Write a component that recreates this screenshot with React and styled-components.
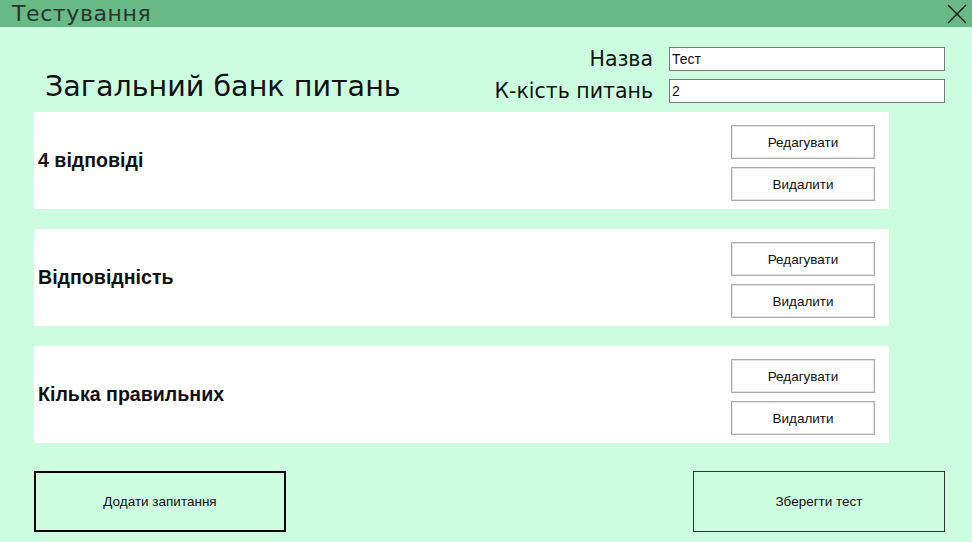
import React from "react";
import styled, { createGlobalStyle } from "styled-components";

const GlobalStyle = createGlobalStyle`
  html, body {
    margin: 0;
    padding: 0;
    background: #ccfde0;
  }
  body {
    font-family: "Liberation Sans", Arial, sans-serif;
  }
`;

const questions = [
  { id: 1, title: "4 відповіді" },
  { id: 2, title: "Відповідність" },
  { id: 3, title: "Кілька правильних" },
];

const App = () => {
  return (
    <Window>
      <GlobalStyle />
      <TitleBar>
        <TitleText>Тестування</TitleText>
        <CloseButton aria-label="Закрити">
          <svg width="22" height="22" viewBox="0 0 22 22">
            <path d="M2 2 L20 20 M20 2 L2 20" stroke="#111" strokeWidth="1.4" fill="none" />
          </svg>
        </CloseButton>
      </TitleBar>

      <Content>
        <Header>
          <Heading>Загальний банк питань</Heading>
          <Form>
            <FieldLabel>Назва</FieldLabel>
            <TextInput defaultValue="Тест" />
            <FieldLabel>К-кість питань</FieldLabel>
            <TextInput defaultValue="2" />
          </Form>
        </Header>

        <List>
          {questions.map((q) => (
            <Card key={q.id}>
              <CardTitle>{q.title}</CardTitle>
              <Actions>
                <SmallButton>Редагувати</SmallButton>
                <SmallButton>Видалити</SmallButton>
              </Actions>
            </Card>
          ))}
        </List>

        <Footer>
          <BigButton $strong>Додати запитання</BigButton>
          <BigButton>Зберегти тест</BigButton>
        </Footer>
      </Content>
    </Window>
  );
};

const Window = styled.div`
  width: 972px;
  height: 542px;
  background: #ccfde0;
  display: flex;
  flex-direction: column;
  overflow: hidden;
`;

const TitleBar = styled.div`
  height: 27px;
  background: #69b986;
  display: flex;
  align-items: center;
  justify-content: space-between;
  padding: 0 3px 0 12px;
`;

const TitleText = styled.div`
  font-family: "DejaVu Sans", sans-serif;
  font-size: 22px;
  letter-spacing: 0.6px;
  color: #26352b;
  line-height: 27px;
`;

const CloseButton = styled.div`
  width: 24px;
  height: 24px;
  display: flex;
  align-items: center;
  justify-content: center;
`;

const Content = styled.div`
  display: flex;
  flex-direction: column;
  padding: 20px 27px 0 34px;
`;

const Header = styled.div`
  display: flex;
  justify-content: space-between;
  align-items: flex-end;
`;

const Heading = styled.h1`
  margin: 0 0 0 11px;
  font-family: "DejaVu Sans", sans-serif;
  font-weight: normal;
  font-size: 28.6px;
  line-height: 34px;
  color: #111;
`;

const Form = styled.div`
  display: grid;
  grid-template-columns: auto 276px;
  column-gap: 16px;
  row-gap: 8px;
  align-items: center;
`;

const FieldLabel = styled.label`
  font-family: "DejaVu Sans", sans-serif;
  font-size: 20.5px;
  color: #111;
  text-align: right;
  line-height: 24px;
`;

const TextInput = styled.input`
  box-sizing: border-box;
  width: 276px;
  height: 24px;
  border: 1px solid #7a7a7a;
  background: #fff;
  font-family: "Liberation Sans", Arial, sans-serif;
  font-size: 14px;
  padding: 0 2px;
  outline: none;
  color: #111;
`;

const List = styled.div`
  display: flex;
  flex-direction: column;
  gap: 20px;
  margin-top: 9px;
`;

const Card = styled.div`
  box-sizing: border-box;
  width: 855px;
  height: 97px;
  background: #fff;
  display: flex;
  justify-content: space-between;
  padding: 0 14px 0 4px;
`;

const CardTitle = styled.div`
  align-self: center;
  font-size: 19.6px;
  font-weight: bold;
  color: #111;
`;

const Actions = styled.div`
  display: flex;
  flex-direction: column;
  gap: 8px;
  margin-top: 13px;
`;

const SmallButton = styled.button`
  box-sizing: border-box;
  width: 144px;
  height: 34px;
  background: #fff;
  border: 1px solid #adadad;
  box-shadow: inset 0 0 0 1px #e3e3e3;
  font-family: "Liberation Sans", Arial, sans-serif;
  font-size: 13.5px;
  color: #111;
  padding: 0;
`;

const Footer = styled.div`
  display: flex;
  justify-content: space-between;
  margin-top: 28px;
`;

const BigButton = styled.button`
  box-sizing: border-box;
  width: 252px;
  height: 61px;
  background: transparent;
  border: ${(p) => (p.$strong ? "2px solid #000" : "1px solid #333")};
  font-family: "Liberation Sans", Arial, sans-serif;
  font-size: 13.5px;
  color: #111;
  padding: 0;
`;

export default App;
